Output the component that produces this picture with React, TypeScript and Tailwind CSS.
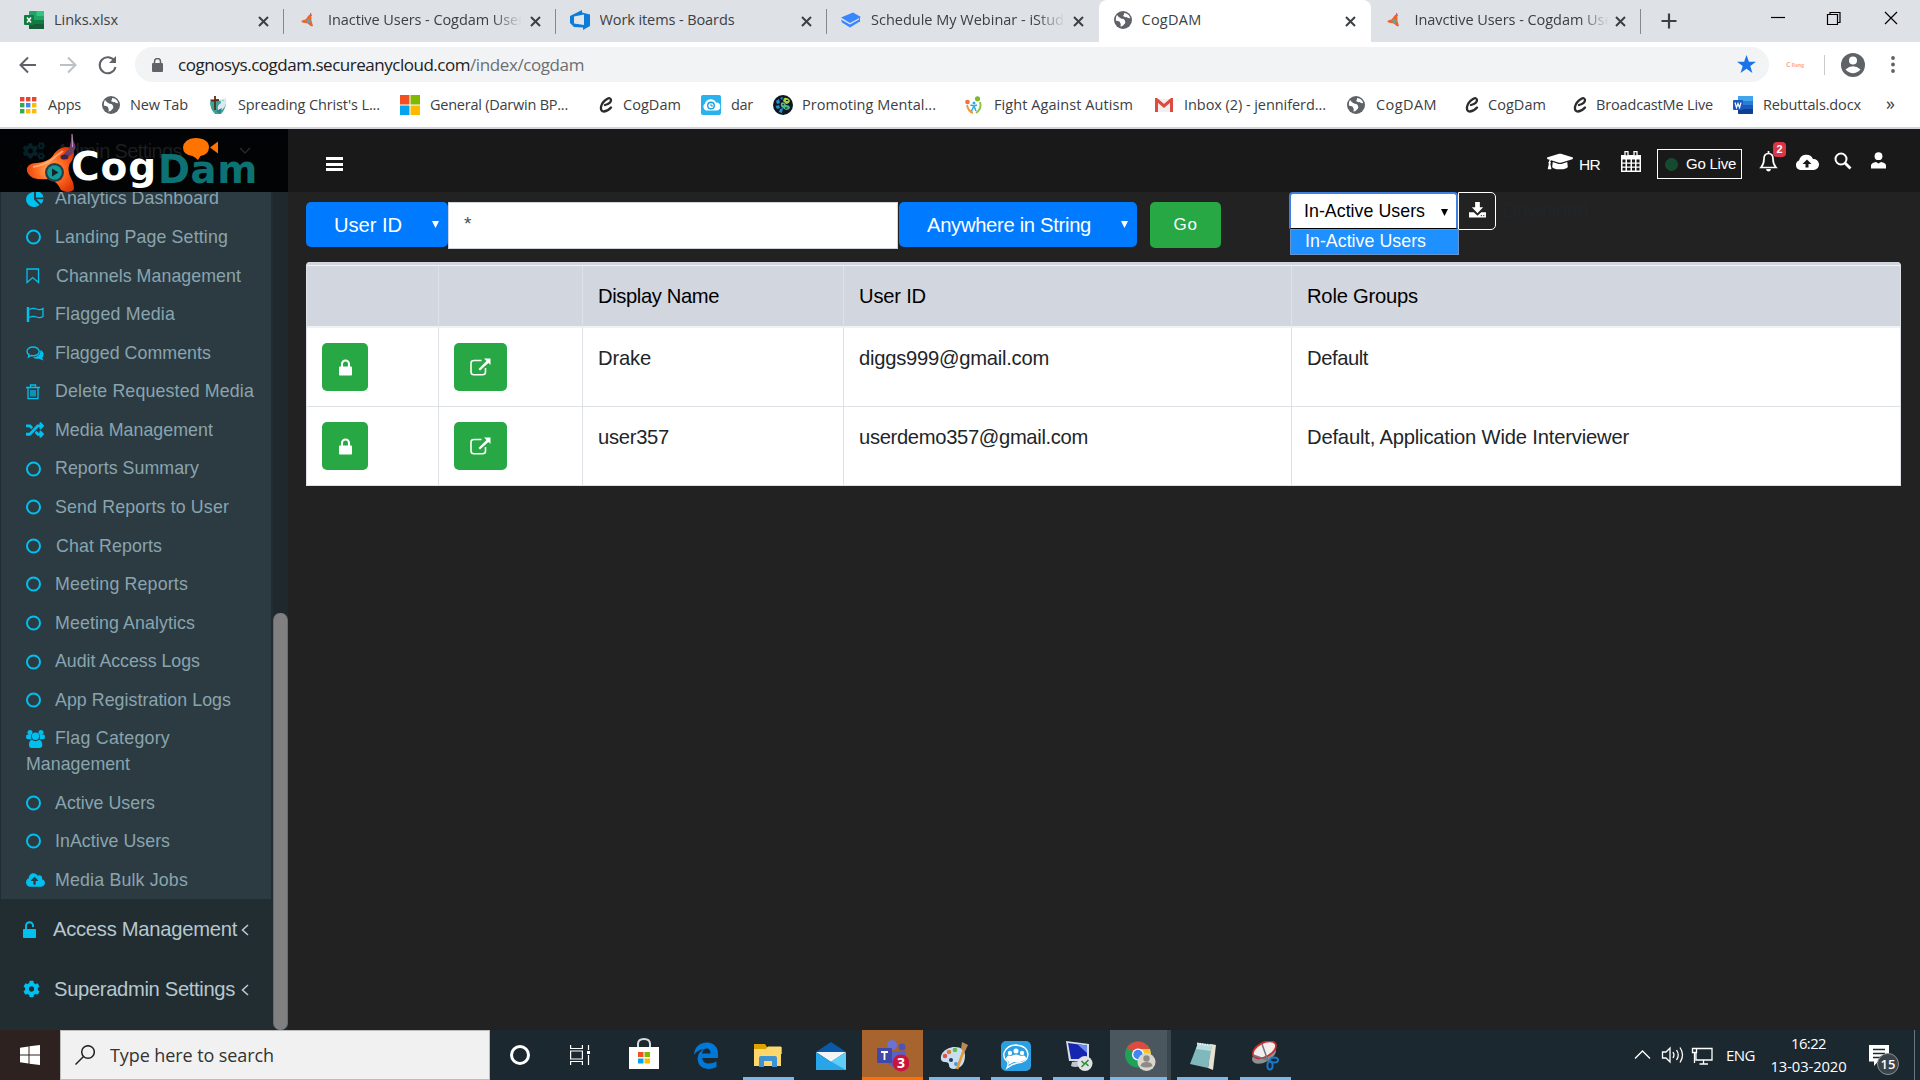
import React, { useLayoutEffect, useRef, useState } from "react";
import {
  FaCloudUploadAlt,
  FaCog,
  FaCogs,
  FaGraduationCap,
  FaRandom,
} from "react-icons/fa";

const UI = "font-['Open_Sans','Noto_Sans',sans-serif]";
const ARIAL = "font-['Liberation_Sans',Arial,sans-serif]";

/** One line of text whose letter spacing is adjusted to fill `w` pixels. */
function Fit({ w, className = "", children }: { w: number; className?: string; children: string }) {
  const ref = useRef<HTMLSpanElement>(null);
  const [ls, setLs] = useState(0);
  useLayoutEffect(() => {
    const el = ref.current;
    if (el) setLs((w - el.getBoundingClientRect().width) / children.length);
  }, [w, children]);
  return (
    <span ref={ref} className={`inline-block shrink-0 whitespace-pre ${className}`} style={{ letterSpacing: ls }}>
      {children}
    </span>
  );
}

/* ---------- small icons ---------- */

const Rocket = () => (
  <svg className="h-[14px] w-[13px]" viewBox="0 0 13 14">
    <path d="M9.500 0L10.500 4.500Q10 6.500 11 9.500L12 13Q10 14 8.500 12Q7 10 4 10Q0 9.500 0.500 8Q2 6.800 4.500 6.500Q6.500 4 7 3Q8 2 8.500 2Z" fill="#f4612a" />
    <circle cx="7.500" cy="8" r="2.200" fill="#5ea6a0" />
    <path d="M9.500 0L10.500 3" stroke="#8a4a8a" strokeWidth="0.800" />
  </svg>
);
const Excel = () => (
  <svg className="h-[18px] w-5" viewBox="0 0 20 18">
    <rect x="5" width="15" height="18" rx="1" fill="#21a366" />
    <rect x="5" y="9" width="15" height="9" fill="#107c41" />
    <rect x="12.500" width="7.500" height="5" fill="#33c481" />
    <rect x="5" y="13" width="15" height="5" rx="1" fill="#185c37" />
    <rect y="4" width="10" height="10" rx="1" fill="#107c41" />
    <path d="M3 6.500L7 11.500M7 6.500L3 11.500" stroke="#fff" strokeWidth="1.500" />
  </svg>
);
const Word = () => (
  <svg className="h-[18px] w-5" viewBox="0 0 20 18">
    <rect x="5" width="15" height="18" rx="1" fill="#2b7cd3" />
    <rect x="5" width="15" height="5" rx="1" fill="#41a5ee" />
    <rect x="5" y="9" width="15" height="5" fill="#185abd" />
    <rect x="5" y="13" width="15" height="5" rx="1" fill="#103f91" />
    <rect y="4" width="10" height="10" rx="1" fill="#185abd" />
    <path d="M2 6.500L3.500 11.500L5 7.500L6.500 11.500L8 6.500" stroke="#fff" fill="none" strokeWidth="1.200" />
  </svg>
);
const Azure = () => (
  <svg className="h-5 w-5" viewBox="0 0 20 20">
    <path d="M0 6L5 3.500L12 0V2.500L20 4.500V16L13 20V17.500L4 17L0 13Z" fill="#0f7bd8" />
    <path d="M4 6.500L14 4.500V15L4 13.500Z" fill="#dfe4ea" />
  </svg>
);
const Cap = () => (
  <svg className="h-4 w-5" viewBox="0 0 20 16">
    <path d="M0 5.500L12 0.500L20 5L9 11Z" fill="#3a86ff" />
    <path d="M0 7.500L9 12.500L18 7.500V10L9 15.500L1 10.500Z" fill="#3a86ff" />
    <path d="M18.500 6V10" stroke="#3a86ff" />
  </svg>
);
const Globe = () => (
  <svg className="h-[18px] w-[18px]" viewBox="0 0 18 18">
    <circle cx="9" cy="9" r="9" fill="#5f6368" />
    <path d="M3 4Q6 8 9.500 8Q12 10 11 12.500Q8 16 6.500 15.500Q7 12 5.500 10.500L1.800 9.500Q1.500 6 3 4ZM10 2Q15 2.500 16.200 7Q14 7.500 12.500 6Q11 6.500 9 5Q10.500 3.500 10 2Z" fill="#fff" />
  </svg>
);
const AppsGrid = () => (
  <svg className="h-[17px] w-[17px]" viewBox="0 0 17 17">
    {["#ea4335", "#ea4335", "#ea4335", "#34a853", "#4285f4", "#fbbc05", "#34a853", "#fbbc05", "#fbbc05"].map((c, i) => (
      <rect key={i} x={(i % 3) * 6} y={Math.floor(i / 3) * 6} width="4.400" height="4.400" fill={c} />
    ))}
  </svg>
);
const Dove = () => (
  <svg className="h-[19px] w-[19px]" viewBox="0 0 19 19">
    <path d="M1 6Q4 3 9 5L17 3Q18 12 12 18H6Q1 13 1 6Z" fill="#3da396" />
    <path d="M9 14Q8 9 12 7L11 2L14 5L16.500 1Q19 9 13 14Z" fill="#dbe9ee" />
    <path d="M6 0V14M1.500 4.500L10 4" stroke="#5b2c1b" strokeWidth="1.800" />
    <path d="M7 15L13 12L11 18Z" fill="#2f7f8a" />
  </svg>
);
const MsLogo = () => (
  <svg className="h-5 w-5" viewBox="0 0 20 20">
    <path d="M0 0H9.500V9.500H0Z" fill="#f25022" />
    <path d="M10.500 0H20V9.500H10.500Z" fill="#7fba00" />
    <path d="M0 10.500H9.500V20H0Z" fill="#00a4ef" />
    <path d="M10.500 10.500H20V20H10.500Z" fill="#ffb900" />
  </svg>
);
const ScriptC = () => (
  <svg className="h-4 w-[14px]" viewBox="0 0 14 16" fill="none" stroke="#2b2b2b" strokeLinecap="round">
    <path d="M6 8Q12 6.500 12 3Q11.500 0 8 2Q3 5 2 10Q1.500 14.500 5 14.500Q9 14 12 10.500" strokeWidth="2.300" />
  </svg>
);
const CloudClock = () => (
  <svg className="h-5 w-5" viewBox="0 0 20 20">
    <rect width="20" height="20" rx="2" fill="#29b2ec" />
    <path d="M5 15.500A4 4 0 0 1 4 8.500A6 6 0 0 1 15 7.500A4 4 0 0 1 15.500 15.500Z" fill="#fff" />
    <circle cx="10" cy="10.500" r="3.300" fill="none" stroke="#1a9fe0" strokeWidth="1.400" />
    <path d="M10 8.500V11H12" stroke="#1a9fe0" fill="none" />
  </svg>
);
const Mental = () => (
  <svg className="h-5 w-5" viewBox="0 0 20 20">
    <circle cx="10" cy="10" r="10" fill="#0c1720" />
    <path d="M3 6L6 4L7 8L4 9ZM2.500 11L6 10L7 13L4 14ZM7 14L10 13L9 18L6 17ZM7 3L10 2L9 5Z" fill="#1f8fd6" />
    <path d="M11 3Q15 2 17 6Q16 9 13 9L10 6Z" fill="#a4cf3c" />
    <path d="M8 8Q11 6 13 10Q17 10 17 13Q14 17 10 13Q7 12 8 8Z" fill="#4fb58a" />
    <path d="M9.500 9.500L11 10M12 13H14.500M13 5.500H15" stroke="#0c1720" />
  </svg>
);
const Autism = () => (
  <svg className="h-[18px] w-[17px]" viewBox="0 0 17 18">
    <circle cx="12.500" cy="2.800" r="2.600" fill="#7db82f" />
    <circle cx="2.500" cy="6" r="2.300" fill="#f2703a" />
    <path d="M15 6Q17 13 11 17" stroke="#8cc63f" strokeWidth="2" fill="none" />
    <path d="M2 9Q3 15 8 17" stroke="#f39a3c" strokeWidth="2" fill="none" />
    <circle cx="9" cy="7" r="1.500" fill="#29a9df" />
    <path d="M5.500 9L9 10L12 9M9 10L6.500 15M9 10L11 15" stroke="#29a9df" strokeWidth="1.500" fill="none" />
  </svg>
);
const Gmail = () => (
  <svg className="h-[14px] w-[18px]" viewBox="0 0 18 14">
    <path d="M1 1H17V14H1Z" fill="#f1efef" />
    <path d="M1.500 14V1.500L9 8L16.500 1.500V14" fill="none" stroke="#dd4b3e" strokeWidth="3" />
  </svg>
);
const X = () => (
  <svg className="h-[11px] w-[11px]" viewBox="0 0 11 11">
    <path d="M1 1L10 10M10 1L1 10" stroke="#3c4043" strokeWidth="2" />
  </svg>
);

/* ---------- browser chrome ---------- */

type TabDef = { icon: React.ReactNode; iconBox: string; title: string; w: number; active?: boolean; fade?: boolean };
const tabs: TabDef[] = [
  { icon: <Excel />, iconBox: "ml-6", title: "Links.xlsx", w: 64 },
  { icon: <Rocket />, iconBox: "ml-[17px] pr-[6px]", title: "Inactive Users - Cogdam User", w: 196, fade: true },
  { icon: <Azure />, iconBox: "ml-[14px]", title: "Work items - Boards", w: 135 },
  { icon: <Cap />, iconBox: "ml-[14px]", title: "Schedule My Webinar - iStud", w: 193, fade: true },
  { icon: <Globe />, iconBox: "ml-[15px]", title: "CogDAM", w: 60, active: true },
  { icon: <Rocket />, iconBox: "ml-[16px] pr-[5px]", title: "Inavctive Users - Cogdam Use", w: 198, fade: true },
];

function TabStrip() {
  return (
    <div className={`flex h-[42px] bg-[#dee1e6] ${UI} text-[14.500px] text-[#3c4043]`}>
      {tabs.map((t, i) => (
        <div
          key={t.title}
          className={`flex items-center ${i === 0 ? "w-[284px]" : i === 4 ? "w-[272px]" : i === 5 ? "w-[270px]" : "w-[271.500px]"} ${
            t.active ? "rounded-t-lg bg-white" : ""
          }`}
        >
          <div className={`-mt-[2px] shrink-0 ${t.iconBox}`}>{t.icon}</div>
          <div
            className={`-mt-[2px] w-[196px] overflow-hidden ${i === 1 ? "ml-[8px]" : "ml-[10px]"} ${
              t.fade ? "[mask-image:linear-gradient(to_right,black_165px,transparent_194px)]" : ""
            }`}
          >
            <Fit w={t.w}>{t.title}</Fit>
          </div>
          <div className={`ml-auto shrink-0 ${t.active ? "mr-[15px]" : i === 3 ? "mr-[15px]" : "mr-[14px]"}`}><X /></div>
          {!t.active && i !== 3 && <div className="h-[25px] w-px shrink-0 bg-[#85888c]" />}
        </div>
      ))}
      <svg className="ml-[20px] mt-[13px] h-4 w-4" viewBox="0 0 16 16">
        <path d="M8 0.500V15.500M0.500 8H15.500" stroke="#3c4043" strokeWidth="2.200" />
      </svg>
      <svg className="ml-[94px] mt-[10px] h-4 w-[130px]" viewBox="0 0 130 16" fill="none" stroke="#000" strokeWidth="1.200">
        <path d="M0 7.500H14" />
        <path d="M56.500 4.500H66.500V14.500H56.500ZM59 4.500V2.500H69V12.500H66.500" />
        <path d="M114 2L126 14M126 2L114 14" />
      </svg>
    </div>
  );
}

function AddressBar() {
  return (
    <div className={`flex h-[45px] items-center bg-white ${UI}`}>
      <svg className="ml-[19px] h-[22px] w-[100px] shrink-0" viewBox="0 0 100 22" fill="none" strokeWidth="2">
        <path d="M17 11H2M9 3.500L1.500 11L9 18.500" stroke="#5f6368" />
        <path d="M41 11H56M49 3.500L56.500 11L49 18.500" stroke="#bdc1c6" />
        <path d="M95.500 7A8 8 0 1 0 96.500 13" stroke="#5f6368" />
        <path d="M97 2V9H90Z" fill="#5f6368" stroke="none" />
      </svg>
      <div className="ml-4 flex h-[35px] w-[1634px] items-center rounded-full bg-[#f1f3f4]">
        <svg className="ml-[17px] h-[14px] w-[11px]" viewBox="0 0 11 14">
          <rect y="5" width="11" height="9" rx="1" fill="#5f6368" />
          <path d="M2.500 6V3.500A3 3 0 0 1 8.500 3.500V6" fill="none" stroke="#5f6368" strokeWidth="1.500" />
        </svg>
        <Fit w={292} className="ml-[15px] text-[17px] text-[#202124]">cognosys.cogdam.secureanycloud.com</Fit>
        <Fit w={114} className="text-[17px] text-[#6b6f73]">/index/cogdam</Fit>
        <svg className="ml-auto mr-[13px] h-[19px] w-[19px]" viewBox="0 0 20 20">
          <path d="M10 0L12.500 7H20L14 11.500L16.200 19L10 14.500L3.800 19L6 11.500L0 7H7.500Z" fill="#1a73e8" />
        </svg>
      </div>
      <div className="ml-[17px] w-5 text-[7px] font-bold leading-none text-[#ffab8c]">C<span className="text-[5px]"> Rang</span></div>
      <div className="ml-[18px] h-5 w-px bg-[#c8cacd]" />
      <svg className="ml-4 h-6 w-6" viewBox="0 0 24 24">
        <circle cx="12" cy="12" r="12" fill="#5f6368" />
        <circle cx="12" cy="7.500" r="4" fill="#fff" />
        <path d="M4.500 16.500Q12 10 19.500 16.500Q12 24 4.500 16.500Z" fill="#fff" />
      </svg>
      <svg className="ml-[26px] h-[17px] w-1" viewBox="0 0 4 17" fill="#5f6368">
        <circle cx="2" cy="2" r="1.900" />
        <circle cx="2" cy="8.500" r="1.900" />
        <circle cx="2" cy="15" r="1.900" />
      </svg>
    </div>
  );
}

const bookmarks: { icon: React.ReactNode; box: string; gap: string; title: string; w: number }[] = [
  { icon: <AppsGrid />, box: "w-[82px]", gap: "w-7", title: "Apps", w: 33 },
  { icon: <Globe />, box: "w-[107px]", gap: "w-[28px]", title: "New Tab", w: 58 },
  { icon: <Dove />, box: "w-[191px]", gap: "w-[29px]", title: "Spreading Christ's L...", w: 142 },
  { icon: <MsLogo />, box: "w-[199px]", gap: "w-[30px]", title: "General (Darwin BP...", w: 138 },
  { icon: <ScriptC />, box: "w-[102px]", gap: "w-6", title: "CogDam", w: 58 },
  { icon: <CloudClock />, box: "w-[72px]", gap: "w-[30px]", title: "dar", w: 22 },
  { icon: <Mental />, box: "w-[192px]", gap: "w-[29px]", title: "Promoting Mental...", w: 134 },
  { icon: <Autism />, box: "w-[190px]", gap: "w-[29px]", title: "Fight Against Autism", w: 139 },
  { icon: <Gmail />, box: "w-[192px]", gap: "w-[29px]", title: "Inbox (2) - jenniferd...", w: 142 },
  { icon: <Globe />, box: "w-[118px]", gap: "w-[29px]", title: "CogDAM", w: 61 },
  { icon: <ScriptC />, box: "w-[108px]", gap: "w-[23px]", title: "CogDam", w: 58 },
  { icon: <ScriptC />, box: "w-[160px]", gap: "w-[23px]", title: "BroadcastMe Live", w: 117 },
  { icon: <Word />, box: "w-[153px]", gap: "w-[30px]", title: "Rebuttals.docx", w: 98 },
];

function Bookmarks() {
  return (
    <div className={`flex h-[42px] items-center border-b-2 border-[#d3d5db] bg-white pb-1 pl-5 ${UI} text-[14.500px] text-[#3c4043]`}>
      {bookmarks.map((b, i) => (
        <div key={i} className={`flex shrink-0 items-center ${b.box}`}>
          <div className={`shrink-0 ${b.gap}`}>{b.icon}</div>
          <Fit w={b.w} className="-mt-px">{b.title}</Fit>
        </div>
      ))}
      <span className="-mt-1 text-[18px] text-[#3c4043]">»</span>
    </div>
  );
}

/* ---------- sidebar ---------- */

const line = { fill: "none", stroke: "currentColor", strokeWidth: 1.6 } as const;
const Pie = () => (
  <svg className="h-4 w-[18px]" viewBox="0 0 18 16" fill="currentColor">
    <path d="M8 1V8.500L13.500 14A8 7.500 0 1 1 8 1Z" />
    <path d="M10 0A8 7 0 0 1 17.500 6.500H10ZM10.500 8.200H17.500Q17 11.500 15 13Z" />
  </svg>
);
const Ring = () => <svg className="h-4 w-[15px]" viewBox="0 0 15 16"><circle cx="7.500" cy="8" r="6.500" {...line} strokeWidth={2} /></svg>;
const Mark = () => <svg className="h-4 w-[14px]" viewBox="0 0 14 16"><path d="M1 1H12.500V14.500L6.700 9.500L1 14.500Z" {...line} strokeWidth={1.300} /></svg>;
const Flag = () => (
  <svg className="h-[15px] w-[18px]" viewBox="0 0 18 15">
    <path d="M2 0V15" stroke="currentColor" strokeWidth="2.500" />
    <path d="M3.500 2.500Q7 0.500 10.500 2Q14 3.500 17 1.500V9.500Q14 11.500 10.500 10Q7 8.500 3.500 10.500" {...line} strokeWidth={1.300} />
  </svg>
);
const Chat = () => (
  <svg className="h-[15px] w-[18px]" viewBox="0 0 18 15">
    <path d="M7 1C3.500 1 1 3 1 5.500Q1 7.500 3 8.500L2.500 11L5 9.500C10 10.500 13.200 8 13.200 5.500C13.200 3 10.500 1 7 1Z" {...line} strokeWidth={1.400} />
    <path d="M14.500 4Q18 6 17.500 9Q17 11 16 11.500L17.500 14.500L13 12.700Q9 13.300 7 11.500Q14.500 11 14.500 4Z" fill="currentColor" />
  </svg>
);
const Trash = () => (
  <svg className="h-4 w-[14px]" viewBox="0 0 14 16">
    <path d="M0 3.500H14M4.500 3.500V1H9.500V3.500M2 3.500V14.700H12V3.500M5 6V12.500M7 6V12.500M9 6V12.500" {...line} strokeWidth={1.300} />
  </svg>
);
const Group = () => (
  <svg className="h-[18px] w-[19px]" viewBox="0 0 19 18" fill="currentColor">
    <circle cx="4" cy="2.600" r="2.500" />
    <circle cx="15" cy="2.600" r="2.500" />
    <path d="M0 7Q0 4 2.500 4.700L5.300 5Q4.500 7.500 5.500 9.300H2Q0 9.300 0 7ZM19 7Q19 4 16.500 4.700L13.700 5Q14.500 7.500 13.500 9.300H17Q19 9.300 19 7Z" />
    <circle cx="9.500" cy="6.300" r="3.700" />
    <path d="M3 15Q3 10 6 9.800Q9.500 12.500 13 9.800Q16 10 16.300 15Q16.300 18 13.500 18H5.500Q3 18 3 15Z" />
  </svg>
);
const OpenLock = () => (
  <svg className="mr-[17px] h-[17px] w-[13px] text-[#00c0ef]" viewBox="0 0 13 17">
    <rect y="8" width="13" height="9" rx="0.800" fill="currentColor" />
    <path d="M3 9V4.800A3.500 3.600 0 0 1 10 4.800V6" fill="none" stroke="currentColor" strokeWidth="1.900" />
  </svg>
);

const items: { label: string; w: number; icon: React.ReactNode; gap: string }[] = [
  { label: "Analytics Dashboard", w: 164, icon: <Pie />, gap: "w-[29px]" },
  { label: "Landing Page Setting", w: 173, icon: <Ring />, gap: "w-[29px]" },
  { label: "Channels Management", w: 185, icon: <Mark />, gap: "w-[30px]" },
  { label: "Flagged Media", w: 120, icon: <Flag />, gap: "w-[29px]" },
  { label: "Flagged Comments", w: 156, icon: <Chat />, gap: "w-[29px]" },
  { label: "Delete Requested Media", w: 199, icon: <Trash />, gap: "w-[29px]" },
  { label: "Media Management", w: 158, icon: <FaRandom className="h-[18px] w-[18px]" />, gap: "w-[29px]" },
  { label: "Reports Summary", w: 144, icon: <Ring />, gap: "w-[29px]" },
  { label: "Send Reports to User", w: 174, icon: <Ring />, gap: "w-[29px]" },
  { label: "Chat Reports", w: 106, icon: <Ring />, gap: "w-[30px]" },
  { label: "Meeting Reports", w: 133, icon: <Ring />, gap: "w-[29px]" },
  { label: "Meeting Analytics", w: 140, icon: <Ring />, gap: "w-[29px]" },
  { label: "Audit Access Logs", w: 145, icon: <Ring />, gap: "w-[29px]" },
  { label: "App Registration Logs", w: 176, icon: <Ring />, gap: "w-[29px]" },
  { label: "Flag Category", w: 115, icon: <Group />, gap: "w-[29px]" },
  { label: "Active Users", w: 100, icon: <Ring />, gap: "w-[29px]" },
  { label: "InActive Users", w: 115, icon: <Ring />, gap: "w-[29px]" },
  { label: "Media Bulk Jobs", w: 133, icon: <FaCloudUploadAlt className="h-[18px] w-[19px]" />, gap: "w-[29px]" },
];

function Logo() {
  return (
    <div className="relative h-[63px] w-[288px] shrink-0 bg-[#020304]">
      <div className="absolute left-[23px] top-[7px] flex items-center text-[#05222b]">
        <FaCogs className="mr-[11px] h-[22px] w-[22px]" />
        <Fit w={126} className={`text-[20px] text-[#1b1e20] ${ARIAL}`}>Admin Settings</Fit>
        <svg className="ml-[57px] h-2 w-3" viewBox="0 0 12 8"><path d="M1 1L6 6L11 1" fill="none" stroke="#25292b" strokeWidth="1.500" /></svg>
      </div>
      <svg className="absolute left-[25px] top-[4px] h-[59px] w-[54px]" viewBox="0 0 54 59">
        <defs>
          <radialGradient id="spin" cx="50%" cy="50%" r="60%">
            <stop offset="0" stopColor="#ffb066" />
            <stop offset="0.500" stopColor="#ff6a20" />
            <stop offset="1" stopColor="#dd3608" />
          </radialGradient>
        </defs>
        <path d="M41 14Q49 14 49 22Q48 27 44.500 31Q42 38 46 45Q50 52 48.500 57Q43 61 36 57Q32 48 24 46Q14 47 8 45Q1 41 2 35Q4 30 12 30Q22 29 27 24Q33 14 41 14Z" fill="url(#spin)" />
        <path d="M8 34Q18 32 25 28Q32 22 38 18" fill="none" stroke="#ffc08a" strokeWidth="2" opacity="0.700" />
        <circle cx="29.500" cy="39.500" r="9.500" fill="#263b45" />
        <circle cx="29.500" cy="39.500" r="7.300" fill="#139b98" />
        <path d="M27 35.500L33.500 39.500L27 43.500Z" fill="#13222a" />
        <path d="M47 1Q48 8 50.500 13Q50 18 46 22L37 27Q38 20 44 16Q46 10 47 1Z" fill="#6b3f68" />
        <path d="M47 1L47.500 14" stroke="#c99bd0" />
        <ellipse cx="39.500" cy="24" rx="4" ry="2.500" fill="#3e244c" />
      </svg>
      <span className="absolute left-[71px] top-[15px] flex whitespace-nowrap font-['DejaVu_Sans',sans-serif] text-[39px] font-bold leading-[46px] text-white">
        <Fit w={86}>Cog</Fit>
      </span>
      <span className="absolute left-[158px] top-[18px] flex whitespace-nowrap font-['DejaVu_Sans',sans-serif] text-[38.500px] font-bold leading-[46px] text-[#0d7273]">
        <Fit w={100}>Dam</Fit>
      </span>
      <svg className="absolute left-[182px] top-[9px] h-[22px] w-[37px]" viewBox="0 0 37 22" fill="#ff7300">
        <path d="M13.500 0Q27 0.500 27 9.500Q26.500 17 18.500 18L16 22Q13.500 19.500 10.500 18Q1 17 1 9.500Q2 0.500 13.500 0Z" />
        <path d="M28 9.500L36 3.500V15.500Z" />
      </svg>
    </div>
  );
}

function Sidebar() {
  return (
    <div className={`flex h-[838px] w-[288px] shrink-0 bg-[#222d32] ${ARIAL}`}>
      <div className="w-[273px]">
        <div className="ml-px h-[707px] w-[270px] overflow-hidden bg-[#2c3b41] pl-[25px] text-[17.800px] text-[#8aa4af]">
          <div className="-mt-[12px]">
            {items.map((it) => (
              <div key={it.label} className="py-[6.440px] leading-[25.700px]">
                <div className="flex h-[25.700px] items-center">
                  <div className={`-mt-px shrink-0 text-[#00c0ef] ${it.gap}`}>{it.icon}</div>
                  <Fit w={it.w}>{it.label}</Fit>
                </div>
                {it.label === "Flag Category" && <Fit w={104}>Management</Fit>}
              </div>
            ))}
          </div>
        </div>
        <div className="flex h-[60px] items-center pl-[23px] text-[20.200px] text-[#b8c7ce]">
          <OpenLock />
          <Fit w={184}>Access Management</Fit>
          <svg className="ml-1 mt-[2px] h-3 w-2" viewBox="0 0 8 12"><path d="M7 1L1.500 6L7 11" {...line} /></svg>
        </div>
        <div className="flex h-[60px] items-center pl-[23px] text-[20.200px] text-[#b8c7ce]">
          <FaCog className="mr-[14px] h-[18px] w-[17px] text-[#00c0ef]" />
          <Fit w={181}>Superadmin Settings</Fit>
          <svg className="ml-[6px] mt-[2px] h-3 w-2" viewBox="0 0 8 12"><path d="M7 1L1.500 6L7 11" {...line} /></svg>
        </div>
      </div>
      <div className="w-[15px] bg-[#1e282d] pt-[421px]">
        <div className="h-[417px] w-[15px] rounded-[7px] border-x border-[#6a6a6a] bg-[#808080]" />
      </div>
    </div>
  );
}

/* ---------- app header ---------- */

function Header() {
  return (
    <div className={`flex h-[63px] bg-[#191919] text-white ${ARIAL}`}>
      <Logo />
      <div className="ml-[38px] mt-[28px] flex h-[14px] w-[17px] flex-col justify-between">
        <div className="h-[3px] bg-white" />
        <div className="h-[3px] bg-white" />
        <div className="h-[3px] bg-white" />
      </div>
      <FaGraduationCap className="ml-[1204px] mt-[20px] h-[25px] w-[26px]" />
      <Fit w={21} className="ml-[6px] mt-[24px] text-[15.500px]">HR</Fit>
      <svg className="ml-[21px] mt-[22px] h-[21px] w-5" viewBox="0 0 20 21">
        <path d="M0 4H20V21H0Z" fill="#fff" />
        <path d="M4 0.500H7V5H4ZM13 0.500H16V5H13Z" fill="#191919" stroke="#fff" strokeWidth="1.300" />
        <path d="M1.500 8.500H4.500V11.500H1.500ZM6 8.500H9.500V11.500H6ZM11 8.500H14V11.500H11ZM15.500 8.500H18.500V11.500H15.500ZM1.500 12.700H4.500V15.500H1.500ZM6 12.700H9.500V15.500H6ZM11 12.700H14V15.500H11ZM15.500 12.700H18.500V15.500H15.500ZM1.500 16.700H4.500V19.500H1.500ZM6 16.700H9.500V19.500H6ZM11 16.700H14V19.500H11ZM15.500 16.700H18.500V19.500H15.500Z" fill="#191919" />
      </svg>
      <div className="ml-[16px] mt-[20px] flex h-[30px] w-[85px] shrink-0 items-center border border-white">
        <div className="ml-[7px] h-[13px] w-[13px] rounded-full bg-[#164a30]" />
        <Fit w={50} className="ml-2 text-[15px]">Go Live</Fit>
      </div>
      <div className="relative ml-[17px] mt-[22px] h-[21px] w-[19px] shrink-0">
        <svg className="h-[21px] w-[19px]" viewBox="0 0 19 21">
          <path d="M9.500 0V2M2 16.500Q5 13 5 8Q5 2.500 9.500 2.500Q14 2.500 14 8Q14 13 17 16.500Z" fill="none" stroke="#fff" strokeWidth="1.700" />
          <path d="M7 18H12Q11.500 20.500 9.500 20.500Q7.500 20.500 7 18Z" fill="#fff" />
        </svg>
        <span className="absolute -top-[9px] left-[14px] flex h-[15px] w-[13px] items-center justify-center rounded-[4px] bg-[#dc3545] text-[11px] font-bold leading-none">2</span>
      </div>
      <svg className="ml-[17px] mt-[25px] h-[16px] w-[24px]" viewBox="0 0 24 16">
        <path d="M5 16A5 5 0 0 1 4 6.500A7.500 7.500 0 0 1 18 5A5.500 5.500 0 0 1 19 16Z" fill="#fff" />
        <path d="M12 5.500L16.500 10H13.500V13.500H10.500V10H7.500Z" fill="#191919" />
      </svg>
      <svg className="ml-[15px] mt-[23px] h-[18px] w-[18px]" viewBox="0 0 18 18" fill="none" stroke="#fff">
        <circle cx="7" cy="7" r="5.500" strokeWidth="2" />
        <path d="M11 11L16.500 16.500" strokeWidth="2.800" />
      </svg>
      <svg className="ml-[19px] mt-[23px] h-[17px] w-[15px]" viewBox="0 0 15 17" fill="#fff">
        <circle cx="7.500" cy="4.200" r="3.900" />
        <path d="M0 16.500V13Q1 10.500 5 10L7.500 11.500L10 10Q14 10.500 15 13V16.500Z" />
      </svg>
    </div>
  );
}

/* ---------- main content ---------- */

const Tri = ({ className }: { className: string }) => (
  <svg className={`h-[7px] w-[7px] ${className}`} viewBox="0 0 7 7"><path d="M0 0H7L3.500 7Z" fill="currentColor" /></svg>
);

function Filters() {
  return (
    <div className="flex h-[70px] items-start">
      <div className="mt-[10px] flex h-[45px] w-[142px] items-center rounded-[5px] bg-[#007bff] text-[20.200px] text-white">
        <Fit w={68} className="ml-[28px] mt-px">User ID</Fit>
        <Tri className="ml-auto mr-[9px]" />
      </div>
      <div className="mt-[10px] flex h-[47px] w-[450px] border border-[#ced4da] bg-white pl-[15px] pt-[9px] text-[19px] leading-6 text-[#495057]">*</div>
      <div className="ml-px mt-[10px] flex h-[45px] w-[238px] items-center rounded-[5px] bg-[#007bff] text-[20.200px] text-white">
        <Fit w={164} className="ml-[28px] mt-px">Anywhere in String</Fit>
        <Tri className="ml-auto mr-[9px]" />
      </div>
      <div className="ml-[13px] mt-[10px] flex h-[46px] w-[71px] items-center justify-center rounded-[5px] bg-[#28a745] text-[17px] text-white">
        <Fit w={24}>Go</Fit>
      </div>
      <div className="relative ml-[68px] h-[37px] w-[169px]">
        <div className="flex h-[37px] items-center rounded-t-[4px] border-2 border-b border-[#3f7fe0] border-b-black bg-white text-[17.800px] text-black">
          <Fit w={121} className="ml-[13px] mt-px">In-Active Users</Fit>
          <Tri className="ml-auto mr-[8px] mt-[2px]" />
        </div>
        <div className="absolute left-px top-[37px] flex h-[26px] w-[169px] items-center border border-[#6b93c9] bg-[#1e90ff] text-[17.800px] text-white">
          <Fit w={121} className="-mt-px ml-[14px]">In-Active Users</Fit>
        </div>
      </div>
      <div className="flex h-[38px] w-[38px] items-center justify-center rounded-r-[5px] border border-white text-white">
        <svg className="-mt-[2px] h-[16px] w-[17px]" viewBox="0 0 18 17">
          <path d="M6.500 0H11.500V5.500H15L9 12L3 5.500H6.500Z" fill="currentColor" />
          <path d="M0 11H5L9 14.500L13 11H18V16.500H0Z" fill="currentColor" />
          <path d="M12.500 14.500H13.800M15 14.500H16.300" stroke="#222" />
        </svg>
      </div>
      <Fit w={85} className="ml-[7px] mt-[3px] text-[20.200px] text-[#212529]">Download</Fit>
    </div>
  );
}

const Lock = () => (
  <svg className="h-[17px] w-[13px]" viewBox="0 0 13 17">
    <rect y="7.500" width="13" height="9" rx="0.800" fill="#fff" />
    <path d="M3 8.500V5A3.500 3.500 0 0 1 10 5V8.500" fill="none" stroke="#fff" strokeWidth="2.100" />
  </svg>
);
const External = () => (
  <svg className="h-[18px] w-[21px]" viewBox="0 0 21 18">
    <path d="M11.500 2.500H4Q1 2.500 1 5V14Q1 16.800 4 16.800H12.500Q15.500 16.800 15.500 14V10" fill="none" stroke="#fff" strokeWidth="1.600" />
    <path d="M14 0.500H20.500V7L18.500 5L10 12.500L8.500 11L16.500 3Z" fill="#fff" />
  </svg>
);

const COLS = "grid grid-cols-[132px_144px_261px_448px_1fr]";
const rows = [
  { name: "Drake", nw: 53, id: "diggs999@gmail.com", iw: 190, role: "Default", rw: 61 },
  { name: "user357", nw: 71, id: "userdemo357@gmail.com", iw: 229, role: "Default, Application Wide Interviewer", rw: 322 },
];

function UserTable() {
  return (
    <div className="w-[1595px] overflow-hidden rounded-t-[4px] border-x border-b border-[#dee2e6] bg-white text-[20.200px] text-[#212529]">
      <div className="h-[3px] bg-[#d2d5dd]" />
      <div className="h-px bg-[#f1f2f4]" />
      <div className={`${COLS} h-[62px] divide-x divide-[#dee2e6] border-b-2 border-[#f1f2f4] bg-[#d2d6df] leading-[61px] text-black`}>
        <div />
        <div />
        <div className="pl-[15px]"><Fit w={121}>Display Name</Fit></div>
        <div className="pl-[15px]"><Fit w={67}>User ID</Fit></div>
        <div className="pl-[15px]"><Fit w={111}>Role Groups</Fit></div>
      </div>
      {rows.map((r, i) => (
        <div key={r.name} className={`${COLS} divide-x divide-[#dee2e6] leading-[29px] ${i ? "h-[78px]" : "h-[79px] border-b border-[#dee2e6]"}`}>
          <div className="p-[15px]"><div className="flex h-12 w-[46px] items-center justify-center rounded-[5px] bg-[#28a745]"><Lock /></div></div>
          <div className="p-[15px]"><div className="flex h-12 w-[53px] items-center justify-center rounded-[5px] bg-[#28a745]"><External /></div></div>
          <div className="pl-[15px] pt-[16px]"><Fit w={r.nw}>{r.name}</Fit></div>
          <div className="pl-[15px] pt-[16px]"><Fit w={r.iw}>{r.id}</Fit></div>
          <div className="pl-[15px] pt-[16px]"><Fit w={r.rw}>{r.role}</Fit></div>
        </div>
      ))}
    </div>
  );
}

/* ---------- taskbar ---------- */

const Store = () => (
  <svg className="-mt-1 h-[31px] w-[30px]" viewBox="0 0 30 31">
    <path d="M9 11V6Q9 1 15 1Q21 1 21 6V11" fill="none" stroke="#d8dcde" strokeWidth="2" />
    <path d="M0 9H30V31H0Z" fill="#fff" />
    <path d="M9 14H14.500V19H9Z" fill="#f25022" /><path d="M15.500 14H21V19H15.500Z" fill="#7fba00" />
    <path d="M9 20.500H14.500V25.500H9Z" fill="#00a4ef" /><path d="M15.500 20.500H21V25.500H15.500Z" fill="#ffb900" />
  </svg>
);
const Edge = () => (
  <svg className="h-[27px] w-[26px]" viewBox="0 0 26 27">
    <path d="M1 13Q2 1 14 0.500Q25 1 25 13V16H9Q10 21.500 16 21.500Q20 21.500 23.500 19.500V25Q20 27 15 27Q5 26.500 4.500 16.500Q5 10 11 7Q4 8 1 13ZM9 11.500H17.500Q17.500 6.500 13.500 6.500Q9.500 7 9 11.500Z" fill="#0078d7" fillRule="evenodd" />
  </svg>
);
const Explorer = () => (
  <svg className="h-[23px] w-7" viewBox="0 0 28 23">
    <path d="M0 0H11L13 3H28V10H0Z" fill="#dda100" />
    <path d="M0 5H12L14 2.500H27V22H0Z" fill="#ffd76b" />
    <path d="M5 23V14Q5 12 7 12H21Q23 12 23 14V23H18V17H10V23Z" fill="#3f93d3" />
  </svg>
);
const Mail = () => (
  <svg className="h-7 w-[30px]" viewBox="0 0 30 28">
    <path d="M0 10L15 0L30 10Z" fill="#0a5aa8" />
    <path d="M0 10H30L15 20Z" fill="#f2f4f6" />
    <path d="M0 10L15 20L30 10V28H0Z" fill="#27a5e8" />
    <path d="M30 10V28L15 19.500Z" fill="#60cdf5" />
  </svg>
);
const Teams = () => (
  <svg className="h-8 w-8" viewBox="0 0 32 32">
    <circle cx="15" cy="5" r="5" fill="#6b72cf" /><circle cx="25" cy="7" r="3.500" fill="#4b53bc" />
    <path d="M10 11H29V22Q26 28 20 28Q11 27 10 19Z" fill="#5b62c6" />
    <rect y="8" width="15" height="15" rx="1" fill="#4048a8" />
    <path d="M4 12H11M7.500 12V20" stroke="#fff" strokeWidth="1.800" />
    <circle cx="24" cy="23" r="8.500" fill="#c9143f" />
    <text x="24" y="28" fontSize="14" fontWeight="bold" textAnchor="middle" fill="#fff" className="font-['Open_Sans',sans-serif]">3</text>
  </svg>
);
const Paint = () => (
  <svg className="h-7 w-7" viewBox="0 0 28 28">
    <path d="M13 5Q24 4 25 13Q25 26 14 27Q9 27 9 23Q9 20 5 20Q0 20 1 14Q3 7 13 5Z" fill="#c7dff0" />
    <circle cx="5" cy="14" r="2.300" fill="#e4504b" /><circle cx="9" cy="10" r="2.300" fill="#e07a3c" /><circle cx="15" cy="8" r="2.300" fill="#5fbf4a" /><circle cx="11" cy="18" r="2" fill="#243d5c" /><circle cx="16" cy="22" r="2" fill="#3f9be0" />
    <path d="M25 5L17 27" stroke="#e59a35" strokeWidth="2.600" /><path d="M22 0L28 3L25 9L21 7Z" fill="#b98958" />
  </svg>
);
const TeamChat = () => (
  <svg className="h-[30px] w-[30px]" viewBox="0 0 30 30">
    <rect width="30" height="30" rx="5" fill="#2b9fe0" />
    <path d="M15 4Q27 5 27 14Q26 22 16 22Q11 23 6 27Q8 22 6 20Q2 17 3 12Q6 4 15 4Z" fill="none" stroke="#fff" strokeWidth="1.300" />
    <path d="M5 18Q6 13 10 15Q15 12 20 15Q25 13 25 18Q20 22 13 21L7 24L8 21Z" fill="#fff" />
    <circle cx="9" cy="12" r="2.200" fill="#fff" /><circle cx="15" cy="10" r="2.500" fill="#fff" /><circle cx="21" cy="12" r="2.200" fill="#fff" />
  </svg>
);
const Remote = () => (
  <svg className="h-[30px] w-[30px]" viewBox="0 0 30 30">
    <path d="M2 0L25 3V20L5 20Z" fill="#d9dde4" /><path d="M4 2L23 4.500V18L7 18Z" fill="#1726b0" /><path d="M13 3L23 4.500V12Z" fill="#6f8bec" />
    <path d="M8 21L16 20V25Q11 27 7 25Z" fill="#c0c5cc" />
    <circle cx="21" cy="22.500" r="7.500" fill="#e0e2e4" />
    <path d="M17.500 20L20.500 23L17.500 26M24.500 19L21.500 22L24.500 25" stroke="#2f8f3a" fill="none" strokeWidth="1.600" />
  </svg>
);
const Chrome = () => (
  <svg className="h-[30px] w-[31px]" viewBox="0 0 31 30">
    <circle cx="13" cy="13.500" r="13" fill="#1ea25a" />
    <path d="M13 13.500L1.700 7Q6 0.500 13 0.500Q21 0.500 25 8H13Z" fill="#dd4b3e" />
    <path d="M13 8H25Q29 20 17 26L13 13.500Z" fill="#fdc82f" />
    <circle cx="13" cy="13.500" r="6" fill="#fff" /><circle cx="13" cy="13.500" r="4.700" fill="#4285f4" />
    <circle cx="21.500" cy="21" r="9" fill="#d9d6cf" />
    <circle cx="21.500" cy="17.500" r="3.200" fill="#8e8b86" /><path d="M15.500 25Q16 21 21.500 21Q27 21 27.500 25Q21.500 28 15.500 25Z" fill="#8e8b86" />
  </svg>
);
const Notepad = () => (
  <svg className="h-7 w-7" viewBox="0 0 28 28">
    <path d="M22 2L27 3L24 28L19 26Z" fill="#e6e1d0" /><path d="M9 1L23 3L19 26L1 22Z" fill="#7fb8bd" /><path d="M9 1L23 3L22 9L7 7Z" fill="#b7dcdf" />
    <path d="M8 1.500L23 3.500" stroke="#e8eded" strokeWidth="2" strokeDasharray="1.500 1" />
  </svg>
);
const Snip = () => (
  <svg className="h-[30px] w-[28px]" viewBox="0 0 28 30">
    <ellipse cx="13" cy="14" rx="13" ry="7" transform="rotate(-28 13 14)" fill="#8d9094" />
    <ellipse cx="13.500" cy="9" rx="12.500" ry="7" transform="rotate(-28 13 9)" fill="#f2eeee" stroke="#cf2a2a" strokeWidth="1.800" />
    <path d="M11 3L17 20M2 14L19 20" stroke="#71767c" strokeWidth="1.500" />
    <ellipse cx="23" cy="19" rx="4" ry="2.500" fill="none" stroke="#1878c8" strokeWidth="2" /><ellipse cx="19" cy="24.500" rx="2.600" ry="4" fill="none" stroke="#1878c8" strokeWidth="2" />
  </svg>
);

const apps: { icon: React.ReactNode; box: string; bar: string }[] = [
  { icon: <Store />, box: "ml-[31px] w-[62px]", bar: "" },
  { icon: <Edge />, box: "w-[62px]", bar: "" },
  { icon: <Explorer />, box: "w-[62px]", bar: "w-[51px] bg-[#76b9ed]" },
  { icon: <Mail />, box: "w-[63px]", bar: "" },
  { icon: <Teams />, box: "w-[61px] bg-[#a8642f]", bar: "w-full bg-[#ff6f00]" },
  { icon: <Paint />, box: "w-[62px]", bar: "w-[51px] bg-[#76b9ed]" },
  { icon: <TeamChat />, box: "w-[62px]", bar: "w-[51px] bg-[#76b9ed]" },
  { icon: <Remote />, box: "w-[63px]", bar: "w-[51px] bg-[#76b9ed]" },
  { icon: <div className="pl-1"><Chrome /></div>, box: "w-[61px] border-r-4 border-[#3b464c] bg-[#4b575e]", bar: "w-full bg-[#76b9ed]" },
  { icon: <Notepad />, box: "w-[63px]", bar: "w-[51px] bg-[#76b9ed]" },
  { icon: <Snip />, box: "w-[62px]", bar: "w-[51px] bg-[#76b9ed]" },
];

function Taskbar() {
  return (
    <div className={`flex h-[50px] bg-[#1c282f] text-white ${UI}`}>
      <div className="flex w-[60px] shrink-0 items-center justify-center bg-[#2e2220]">
        <svg className="h-5 w-5" viewBox="0 0 20 20" fill="#fff">
          <path d="M0 2.700L8.500 1.500V9.500H0ZM9.500 1.300L20 0V9.500H9.500ZM0 10.500H8.500V18.500L0 17.300ZM9.500 10.500H20V20L9.500 18.700Z" />
        </svg>
      </div>
      <div className="flex w-[430px] shrink-0 items-center border border-[#bcbcbc] bg-[#f1f1f1] text-[#333]">
        <svg className="ml-[14px] h-5 w-5" viewBox="0 0 20 20" fill="none" stroke="#222" strokeWidth="1.500">
          <circle cx="13" cy="7" r="6.300" /><path d="M8.500 11.500L0.500 19.500" />
        </svg>
        <Fit w={164} className="ml-[15px] text-[18px]">Type here to search</Fit>
      </div>
      <div className="ml-[20px] mt-[15px] h-5 w-5 shrink-0 rounded-full border-[3px] border-white" />
      <svg className="ml-[40px] mt-[15px] h-5 w-5 shrink-0" viewBox="0 0 20 20" fill="none" stroke="#fff" strokeWidth="1.200">
        <path d="M0.600 0V3.500H12.400V0M0.600 20V16.500H12.400V20M0.600 6H12.400V14H0.600ZM18.500 0V5M18.500 10V20" /><path d="M17 6H20V9H17Z" fill="#fff" stroke="none" />
      </svg>
      <div className="-ml-[8px] flex">
        {apps.map((a, i) => (
          <div key={i} className={`flex shrink-0 flex-col items-center ${a.box}`}>
            <div className="flex h-[47px] items-center pt-1">{a.icon}</div>
            <div className={`h-[3px] ${a.bar}`} />
          </div>
        ))}
      </div>
      <svg className="ml-auto mt-[14px] h-[22px] w-[79px] shrink-0" viewBox="0 0 79 22" fill="none" stroke="#fff" strokeWidth="1.300">
        <path d="M1 14.500L8.500 7L16 14.500" />
        <path d="M28.500 8H32L36 4V18L32 14H28.500ZM39 8Q41 11 39 14M42.500 6Q46 11 42.500 16M46 3.500Q51 11 46 18.500" />
        <path d="M63 4.500H78V16H62V9M69.500 16V19.500M65.500 20H74M58.500 4.500H62.500V8.500H58.500ZM60.500 8.500V19" />
      </svg>
      <Fit w={29} className="ml-[13px] mt-[13px] text-[15px] leading-6">ENG</Fit>
      <div className="ml-[16px] flex w-[75px] shrink-0 flex-col items-center text-[14.800px] leading-[23px]">
        <Fit w={35} className="mt-[2px]">16:22</Fit>
        <Fit w={76}>13-03-2020</Fit>
      </div>
      <div className="relative ml-[23px] w-[45px] shrink-0">
        <svg className="mt-[15px] h-[22px] w-5" viewBox="0 0 20 22">
          <path d="M0 0H20V16.500H9L5 21V16.500H0Z" fill="#fff" /><path d="M4 4.500H16M4 8.500H16M4 12.500H12" stroke="#1c282f" strokeWidth="1.300" />
        </svg>
        <div className="absolute left-[8px] top-[23px] flex h-[22px] w-[22px] items-center justify-center rounded-full border border-[#8c9296] bg-[#3a444a] text-[13px] font-semibold leading-none">15</div>
      </div>
      <div className="h-full w-[6px] shrink-0 border-l border-[#6d757a]" />
    </div>
  );
}

export default function App() {
  return (
    <div className="flex h-[1080px] w-[1920px] flex-col overflow-hidden bg-[#222222]">
      <TabStrip />
      <AddressBar />
      <Bookmarks />
      <Header />
      <div className="flex h-[838px]">
        <Sidebar />
        <div className={`ml-[18px] ${ARIAL}`}>
          <Filters />
          <UserTable />
        </div>
      </div>
      <Taskbar />
    </div>
  );
}
